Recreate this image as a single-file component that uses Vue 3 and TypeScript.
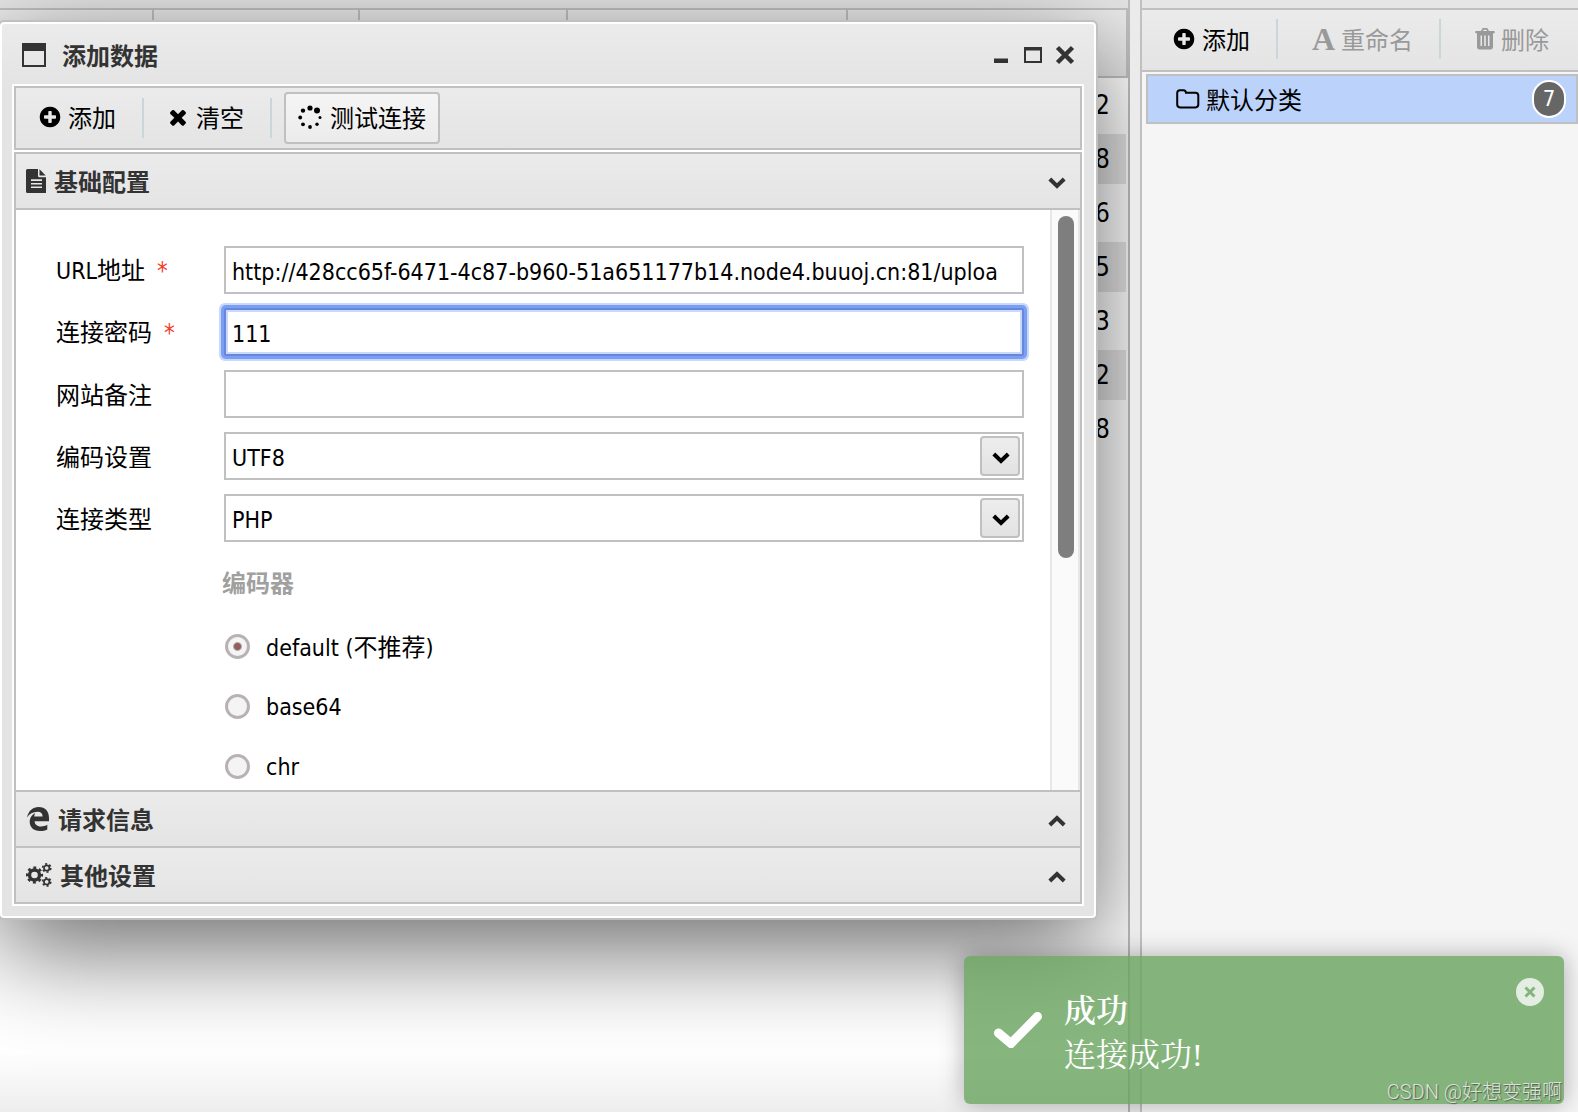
<script setup lang="ts">
import { ref } from 'vue'

const url = ref('http://428cc65f-6471-4c87-b960-51a651177b14.node4.buuoj.cn:81/uploa')
const password = ref('111')
const note = ref('')
const charset = ref('UTF8')
const shellType = ref('PHP')
const encoder = ref('default')

const counts: number[] = [2, 8, 6, 5, 3, 2, 8]

const plusCircle =
  'M1344 960v-128q0-26-19-45t-45-19h-256v-256q0-26-19-45t-45-19h-128q-26 0-45 19t-19 45v256h-256q-26 0-45 19t-19 45v128q0 26 19 45t45 19h256v256q0 26 19 45t45 19h128q26 0 45-19t19-45v-256h256q26 0 45-19t19-45zm320-64q0 209-103 385.5t-279.5 279.5-385.5 103-385.5-103-279.5-279.5-103-385.5 103-385.5 279.5-279.5 385.5-103 385.5 103 279.5 279.5 103 385.5z'
const cross =
  'M1490 1322q0 40-28 68l-136 136q-28 28-68 28t-68-28l-294-294-294 294q-28 28-68 28t-68-28l-136-136q-28-28-28-68t28-68l294-294-294-294q-28-28-28-68t28-68l136-136q28-28 68-28t68 28l294 294 294-294q28-28 68-28t68 28l136 136q28 28 28 68t-28 68l-294 294 294 294q28 28 28 68z'
</script>

<template>
  <div class="page">
    <main class="workspace">
      <div class="strip"></div>
      <table class="grid">
        <colgroup>
          <col class="c1" /><col class="c2" /><col class="c3" /><col class="c4" /><col />
        </colgroup>
        <thead>
          <tr><th></th><th></th><th></th><th></th><th></th></tr>
        </thead>
        <tbody>
          <tr v-for="(n, i) in counts" :key="i">
            <td></td><td></td><td></td><td></td><td>{{ n }}</td>
          </tr>
        </tbody>
      </table>
    </main>
    <div class="splitter"></div>
    <aside class="sidebar">
      <div class="strip"></div>
      <div class="side-tools">
        <button class="tool" type="button">
          <svg class="ico" viewBox="0 0 1792 1792"><path :d="plusCircle" /></svg>添加
        </button>
        <i class="sep"></i>
        <button class="tool off" type="button" disabled><b class="a-icon">A</b>重命名</button>
        <i class="sep"></i>
        <button class="tool off" type="button" disabled>
          <svg class="trash" viewBox="0 0 20 22">
            <path fill-rule="evenodd" d="M6 3l1.200-2.300Q7.500 0 8.300 0h3.400q.8 0 1.100.7L14 3h5q.7 0 .7.700v1q0 .6-.7.600h-1V18.500Q18 21.500 15.500 21.500h-11Q2 21.500 2 18.500V5.300H1q-.7 0-.7-.6v-1Q.3 3 1 3zM8 3h4l-.6-1.300H8.600zM5.500 7.500v10.500h1.500v-10.500zM9.200 7.500v10.500h1.600v-10.500zM13 7.500v10.500h1.500v-10.500z" />
          </svg>删除
        </button>
      </div>
      <a class="category" href="#">
        <svg class="folder" viewBox="0 0 24 20">
          <path d="M1.200 4q0-2.800 2.800-2.800h3.400q2.500 0 2.600 2.600h9.500q2.800 0 2.800 2.800v9q0 2.800-2.800 2.800H4q-2.800 0-2.800-2.800z" fill="none" stroke="#000" stroke-width="2" />
        </svg>
        <span>默认分类</span>
        <span class="badge">7</span>
      </a>
    </aside>

    <section class="dialog" aria-label="添加数据">
      <header class="title">
        <svg class="win" viewBox="0 0 24 24"><path fill-rule="evenodd" d="M0 0h24v24H0zM2 8v14h20V8z" /></svg>
        <h1>添加数据</h1>
        <button class="wbtn" type="button" aria-label="最小化">
          <svg viewBox="0 0 20 20"><path d="M3 13.500h14v4.500H3z" /></svg>
        </button>
        <button class="wbtn" type="button" aria-label="最大化">
          <svg viewBox="0 0 20 20"><path fill-rule="evenodd" d="M1 2h18v16H1zM3 5.500V16h14V5.500z" /></svg>
        </button>
        <button class="wbtn" type="button" aria-label="关闭">
          <svg viewBox="0 0 20 20"><path d="M2.500 2.500l15 15M17.500 2.500l-15 15" stroke="#333" stroke-width="4.500" /></svg>
        </button>
      </header>

      <div class="inner">
        <div class="tools">
          <button class="tool" type="button">
            <svg class="ico" viewBox="0 0 1792 1792"><path :d="plusCircle" /></svg>添加
          </button>
          <i class="sep"></i>
          <button class="tool" type="button">
            <svg class="ico" viewBox="0 0 1792 1792"><path :d="cross" /></svg>清空
          </button>
          <i class="sep"></i>
          <button class="tool raised" type="button">
            <svg class="spin" viewBox="0 0 24 24">
              <circle cx="12" cy="3" r="2.600" /><circle cx="19" cy="5.500" r="3" />
              <circle cx="22" cy="12.500" r="1.500" /><circle cx="19" cy="19.300" r="1.700" />
              <circle cx="12" cy="22" r="1.900" /><circle cx="5" cy="19.300" r="1.900" />
              <circle cx="2.200" cy="12.500" r="1.900" /><circle cx="5" cy="5.600" r="2.200" />
            </svg>测试连接
          </button>
        </div>

        <div class="accordion">
          <button class="bar" type="button">
            <svg class="file" viewBox="0 0 20 24">
              <path fill-rule="evenodd" d="M1.500 0H12v6.800q0 1.500 1.500 1.500H20.500V22.500q0 1.500-1.500 1.500H1.500Q0 24 0 22.500v-21Q0 0 1.500 0zM5 10.300v1.700h11v-1.700zM5 14v1.600h11V14zM5 17.500v1.600h11v-1.600z" />
              <path d="M13.500.3l6.200 6.300h-6.200z" />
            </svg>
            <span>基础配置</span>
            <svg class="chev" viewBox="0 0 18 12"><path d="M1.800 2l7.200 7 7.200-7" /></svg>
          </button>

          <div class="body">
            <form class="form" @submit.prevent>
              <div class="row">
                <label for="url"><span class="latin">URL</span>地址<em>*</em></label>
                <input id="url" v-model="url" type="text" />
              </div>
              <div class="row">
                <label for="pwd">连接密码<em>*</em></label>
                <input id="pwd" v-model="password" class="focused" type="text" />
              </div>
              <div class="row">
                <label for="note">网站备注</label>
                <input id="note" v-model="note" type="text" />
              </div>
              <div class="row">
                <label for="charset">编码设置</label>
                <div class="combo">
                  <select id="charset" v-model="charset"><option>UTF8</option><option>GBK</option></select>
                  <span class="drop"><svg viewBox="0 0 18 12"><path d="M1.800 2l7.200 7 7.200-7" /></svg></span>
                </div>
              </div>
              <div class="row">
                <label for="type">连接类型</label>
                <div class="combo">
                  <select id="type" v-model="shellType"><option>PHP</option><option>ASP</option></select>
                  <span class="drop"><svg viewBox="0 0 18 12"><path d="M1.800 2l7.200 7 7.200-7" /></svg></span>
                </div>
              </div>
              <fieldset class="encoders">
                <legend>编码器</legend>
                <label class="opt">
                  <input v-model="encoder" type="radio" name="encoder" value="default" />
                  <span><span class="latin">default (</span>不推荐<span class="latin">)</span></span>
                </label>
                <label class="opt">
                  <input v-model="encoder" type="radio" name="encoder" value="base64" />
                  <span class="latin">base64</span>
                </label>
                <label class="opt">
                  <input v-model="encoder" type="radio" name="encoder" value="chr" />
                  <span class="latin">chr</span>
                </label>
              </fieldset>
            </form>
            <div class="track"><div class="thumb"></div></div>
          </div>

          <button class="bar" type="button">
            <svg class="edge" viewBox="0 0 22 24">
              <path d="M0 10.500C1.500 3.500 6 0 11.500 0 18.500 0 22 4.500 22 11v3.200H7.600c.2 3.800 3.200 5.200 6.400 5.200 2.500 0 4.700-.7 6.300-1.700v4.700C18.300 23.500 15.700 24 13 24 6.500 24 2.700 20.300 2.700 14.800 2.700 10.800 5 7.600 8.200 6c-.6 1-.9 2.300-1 3.600h8.400c0-3.100-1.600-4.800-5.200-4.800C6 4.800 2.300 7 0 10.500z" />
            </svg>
            <span>请求信息</span>
            <svg class="chev" viewBox="0 0 18 12"><path d="M1.800 10L9 3l7.200 7" /></svg>
          </button>
          <button class="bar" type="button">
            <svg class="cogs" viewBox="0 0 26 24">
              <circle cx="8.500" cy="12" r="5" stroke-width="3.400" />
              <circle cx="8.500" cy="12" r="7.300" stroke-width="2.600" stroke-dasharray="2.870 2.863" stroke-dashoffset="1.400" />
              <circle cx="20.700" cy="5" r="2.700" stroke-width="1.700" />
              <circle cx="20.700" cy="5" r="4.100" stroke-width="1.600" stroke-dasharray="2.147 2.147" />
              <circle cx="20.700" cy="18.800" r="2.700" stroke-width="1.700" />
              <circle cx="20.700" cy="18.800" r="4.100" stroke-width="1.600" stroke-dasharray="2.147 2.147" />
            </svg>
            <span>其他设置</span>
            <svg class="chev" viewBox="0 0 18 12"><path d="M1.800 10L9 3l7.200 7" /></svg>
          </button>
        </div>
      </div>
    </section>

    <div class="toast" role="status">
      <svg class="check" viewBox="0 0 48 36"><path d="M4.500 21L17 31.500 43.500 4.500" /></svg>
      <div class="message">
        <strong>成功</strong>
        <span>连接成功!</span>
      </div>
      <button class="dismiss" type="button" aria-label="关闭">
        <svg viewBox="0 0 12 12"><path d="M1.500 1.500l9 9M10.500 1.500l-9 9" /></svg>
      </button>
    </div>
    <div class="watermark">CSDN @好想变强啊</div>
  </div>
</template>

<style>
body {
  overflow: hidden;
}
</style>

<style scoped>
* {
  box-sizing: border-box;
}
.page {
  position: relative;
  display: flex;
  min-height: 100vh;
  overflow: hidden;
  font: 24px/32px 'Noto Sans CJK SC', sans-serif;
  color: #000;
}
.page::after {
  content: '';
  position: absolute;
  inset: auto 0 0;
  height: 60px;
  background: linear-gradient(transparent, rgba(0, 0, 0, 0.07));
  pointer-events: none;
}
button {
  border: 0;
  padding: 0;
  background: none;
  font: inherit;
  color: inherit;
}
svg {
  flex: none;
  fill: currentColor;
}
.latin {
  font-family: 'DejaVu Sans Condensed', 'DejaVu Sans', sans-serif;
  font-size: 23px;
}

.workspace {
  flex: 1;
  border-right: 2px solid #c0c0c0;
  background: #fff;
}
.strip {
  height: 10px;
  border-bottom: 2px solid #c0c0c0;
  background: #e6e6e6;
}
.grid {
  width: 100%;
  table-layout: fixed;
  border-spacing: 0;
  font: 26px/50px 'DejaVu Sans Condensed', 'DejaVu Sans', sans-serif;
}
.c1 { width: 154px; }
.c2 { width: 206px; }
.c3 { width: 208px; }
.c4 { width: 280px; }
.grid th {
  height: 68px;
  padding: 0;
  border-right: 2px solid #c0c0c0;
  border-bottom: 2px solid #c0c0c0;
  background: linear-gradient(#ebebeb, #e4e4e4);
}
.grid td {
  height: 54px;
  padding: 0 16px 0 0;
  border: solid transparent;
  border-width: 2px 2px 2px 0;
  background-clip: padding-box;
  text-align: right;
}
.grid tbody tr:nth-child(even) td {
  background-color: #e4e4e4;
}
.splitter {
  position: relative;
  z-index: 1;
  width: 10px;
  background: #ebebeb;
}
.sidebar {
  position: relative;
  z-index: 1;
  width: 438px;
  border-left: 2px solid #c0c0c0;
  background: #f5f5f5;
}
.side-tools,
.tools {
  display: flex;
  align-items: center;
  background: linear-gradient(#ebebeb, #e4e4e4);
}
.side-tools {
  height: 62px;
  padding: 0 0 2px 30px;
  border-bottom: 2px solid #c0c0c0;
}
.tool {
  display: flex;
  align-items: center;
  gap: 6px;
  white-space: nowrap;
}
.off {
  color: #999;
}
.ico {
  width: 24px;
  height: 24px;
}
.sep {
  width: 2px;
  height: 40px;
  margin: 0 26px;
  background: #c9d6da;
}
.side-tools .sep {
  margin: 0 34px 0 26px;
}
.a-icon {
  font: bold 32px/32px 'Liberation Serif', serif;
}
.trash {
  width: 20px;
  height: 22px;
}
.category {
  display: flex;
  align-items: center;
  height: 50px;
  margin: 2px 0 0 4px;
  padding: 0 10px 0 28px;
  border: 2px solid #c0c0c0;
  background: #bbd2fb;
  color: #000;
  text-decoration: none;
}
.folder {
  width: 24px;
  height: 20px;
  margin-right: 6px;
}
.folder path {
  fill: none;
}
.badge {
  width: 34px;
  height: 38px;
  margin-left: auto;
  border: 2px solid #fff;
  border-radius: 17px;
  background: #666;
  color: #fff;
  font: 22px/34px 'DejaVu Sans Condensed', 'DejaVu Sans', sans-serif;
  text-align: center;
}

.dialog {
  position: absolute;
  top: 20px;
  left: -2px;
  right: 480px;
  border: 2px solid #c0c0c0;
  border-radius: 6px;
  padding: 0 12px 12px;
  background: #e4e4e4;
  box-shadow: inset 0 0 0 2px #fff, 0 30px 100px rgba(0, 0, 0, 0.58);
}
.title {
  display: flex;
  align-items: center;
  height: 62px;
  margin: 0 -10px;
  padding: 2px 19px 0 20px;
  border-top: 2px solid #fff;
  border-radius: 4px 4px 0 0;
  background: linear-gradient(#ebebeb, #e4e4e4);
  color: #333;
}
.win {
  width: 24px;
  height: 24px;
}
h1 {
  flex: 1;
  margin: 0 0 0 16px;
  font-size: 24px;
  font-weight: 600;
}
.wbtn {
  width: 20px;
  height: 32px;
  margin-left: 12px;
}
.wbtn svg {
  display: block;
  width: 20px;
  height: 20px;
  margin: 6px 0;
}
.inner {
  border: 2px solid #fff;
  background: #fff;
}
.tools {
  height: 64px;
  padding: 0 0 0 22px;
  border: 2px solid #c0c0c0;
}
.tools .tool {
  padding-bottom: 2px;
}
.tools .sep {
  margin: 0 22px 0 26px;
}
.tools .sep + .raised {
  margin-left: -10px;
}
.tools .raised {
  height: 52px;
  padding: 0 12px 2px;
  gap: 8px;
  border: 2px solid #c0c0c0;
  border-radius: 4px;
  background: linear-gradient(#f5f5f5, #ebebeb);
}
.spin {
  width: 24px;
  height: 24px;
}
.accordion {
  margin-top: 2px;
  border: solid #c0c0c0;
  border-width: 2px 2px 0;
}
.bar {
  display: flex;
  align-items: center;
  width: 100%;
  height: 56px;
  padding: 0 14px 0 10px;
  border-bottom: 2px solid #c0c0c0;
  background: linear-gradient(#ebebeb, #e4e4e4);
  color: #333;
  font-weight: 600;
}
.bar span {
  margin-left: 8px;
}
.file {
  width: 20px;
  height: 24px;
}
.edge {
  width: 24px;
  height: 24px;
}
.cogs {
  width: 26px;
  height: 24px;
}
.cogs circle {
  fill: none;
  stroke: #333;
}
.chev {
  width: 18px;
  height: 12px;
  margin: 4px 0 0 auto;
}
.chev path,
.drop path {
  fill: none;
  stroke: currentColor;
  stroke-width: 4;
}
.body {
  display: flex;
  height: 582px;
  border-bottom: 2px solid #c0c0c0;
  background: #fff;
}
.form {
  flex: 1;
  min-width: 0;
  overflow: hidden;
  padding: 36px 26px 0 40px;
}
.row {
  display: flex;
  align-items: center;
  height: 48px;
  margin-bottom: 14px;
}
.row > label {
  width: 168px;
}
em {
  margin-left: 12px;
  color: #f43b2a;
  font-family: 'DejaVu Sans Condensed', 'DejaVu Sans', sans-serif;
  font-style: normal;
}
.row > input,
.combo {
  flex: 1;
  min-width: 0;
  height: 48px;
}
.row > input,
select {
  padding: 3px 6px 0;
  border: 2px solid #c0c0c0;
  border-radius: 0;
  outline: 0;
  background: #fff;
  color: #000;
  font: 23px/32px 'DejaVu Sans Condensed', 'DejaVu Sans', sans-serif;
}
.row > .focused {
  border-color: #6488df;
  border-radius: 2px;
  box-shadow: 0 0 0 3px #7c9ef2, 0 0 0 5px #c8d8fa, inset 0 0 0 2px #cbd8fa;
}
.combo {
  position: relative;
}
select {
  width: 100%;
  height: 48px;
  appearance: none;
}
.drop {
  position: absolute;
  top: 4px;
  right: 4px;
  display: flex;
  align-items: center;
  justify-content: center;
  width: 40px;
  height: 40px;
  padding: 3px 0 0 2px;
  border: 2px solid #c0c0c0;
  border-radius: 4px;
  background: linear-gradient(#ededed, #e2e2e2);
  pointer-events: none;
}
.drop svg {
  width: 18px;
  height: 12px;
}
.encoders {
  margin: 0 0 0 166px;
  padding: 0;
  border: 0;
}
legend {
  padding: 10px 0 18px;
  color: #a0a0a0;
  font-weight: 600;
}
.opt {
  display: flex;
  align-items: center;
  height: 60px;
}
.opt > span {
  padding-top: 2px;
}
.opt input {
  width: 25px;
  height: 25px;
  margin: 0 16px 0 3px;
  border: 3px solid #b8b2b4;
  border-radius: 50%;
  appearance: none;
  background: #f4f4f4;
}
.opt input:checked {
  background: radial-gradient(circle, #8d5f5f 0 3px, #f4f4f4 5px);
}
.track {
  width: 30px;
  padding: 6px 4px 0 6px;
  border: solid #e7e7e7;
  border-width: 0 2px;
  background: #fafafa;
}
.thumb {
  width: 16px;
  height: 342px;
  border-radius: 8px;
  background: #7e7e7e;
}

.toast {
  position: absolute;
  z-index: 2;
  right: 14px;
  bottom: 8px;
  display: flex;
  align-items: center;
  width: 600px;
  height: 148px;
  padding-left: 30px;
  border-radius: 6px;
  background: rgba(104, 164, 93, 0.8);
  box-shadow: 0 0 24px rgba(0, 0, 0, 0.3);
  color: #fff;
}
.check {
  width: 48px;
  height: 36px;
}
.check path {
  fill: none;
  stroke: #fff;
  stroke-width: 9;
  stroke-linecap: round;
}
.message {
  display: flex;
  flex-direction: column;
  padding-top: 6px;
  margin-left: 22px;
  font: 32px/44px 'Liberation Serif', 'Noto Serif CJK SC', 'Noto Sans CJK SC', serif;
}
.message strong {
  font-weight: 600;
}
.dismiss {
  align-self: flex-start;
  display: flex;
  align-items: center;
  justify-content: center;
  width: 28px;
  height: 28px;
  margin: 22px 20px 0 auto;
  border-radius: 50%;
  background: #e3ede1;
}
.dismiss svg {
  width: 12px;
  height: 12px;
}
.dismiss path {
  stroke: #84b47b;
  stroke-width: 3;
}
.watermark {
  position: absolute;
  z-index: 3;
  right: 16px;
  bottom: 6px;
  color: #dbe3d9;
  font: 300 20px/28px Roboto, 'Noto Sans CJK SC', sans-serif;
  text-shadow: 1px 1px 1px #555;
}
</style>
